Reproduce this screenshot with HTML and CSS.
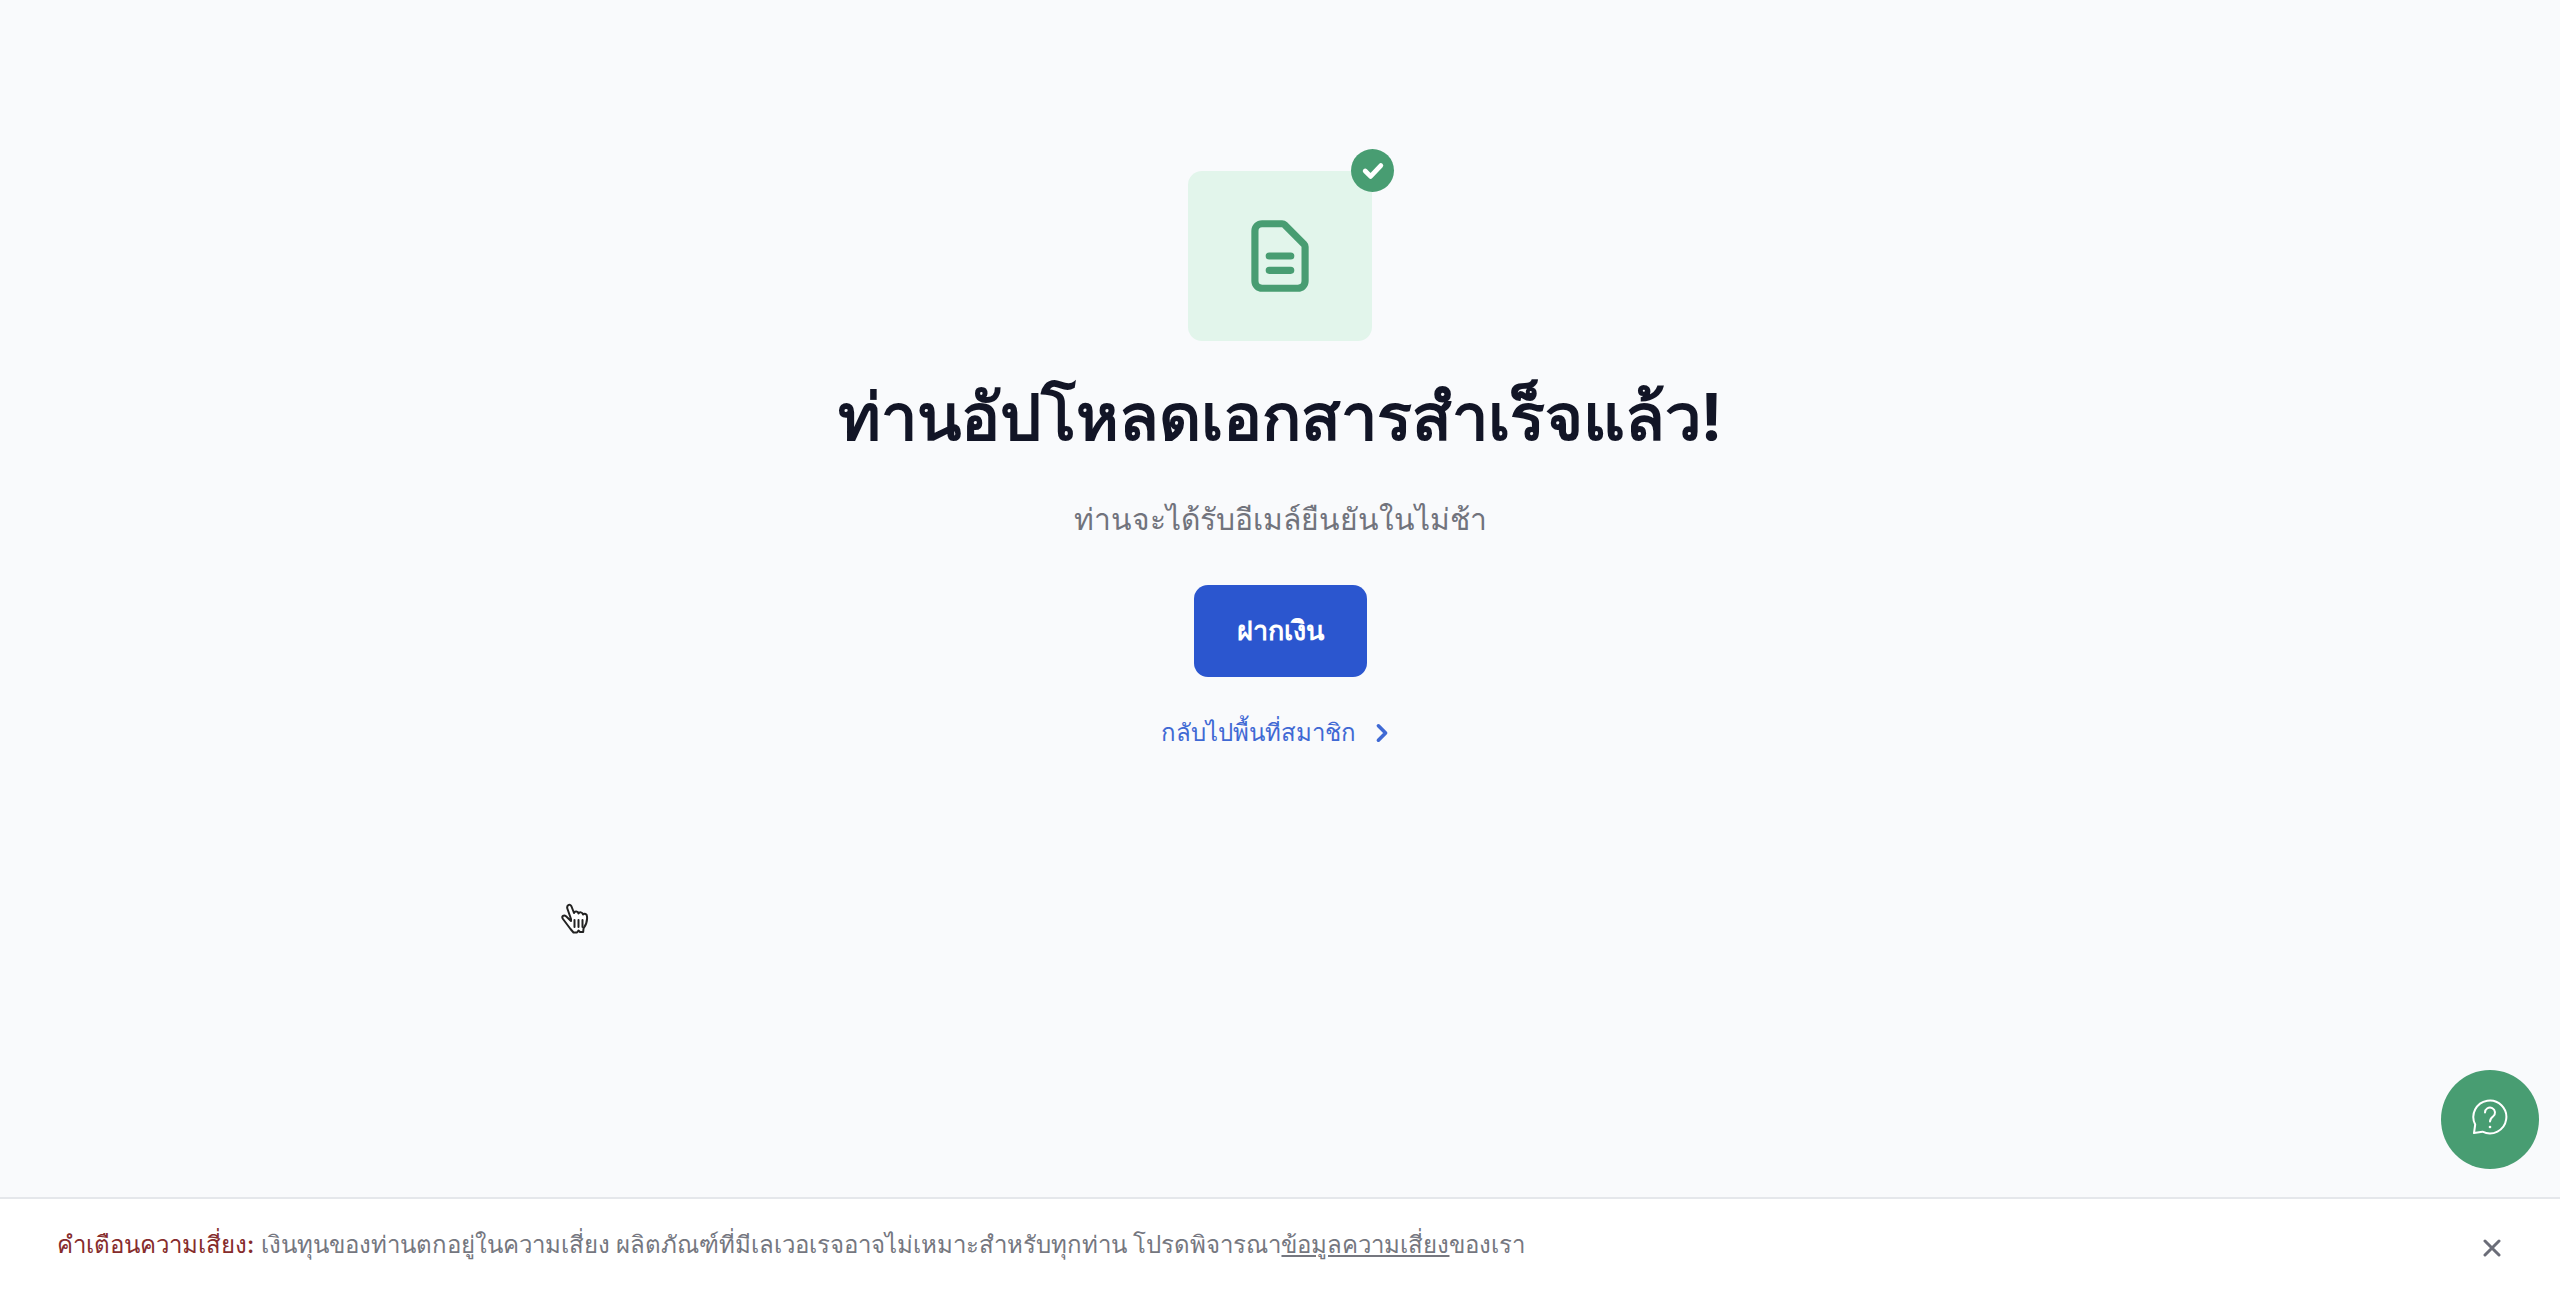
FILE: index.html
```html
<!DOCTYPE html>
<html lang="th">
<head>
  <meta charset="UTF-8">
  <meta name="viewport" content="width=device-width, initial-scale=1.0">
  <title>ท่านอัปโหลดเอกสารสำเร็จแล้ว!</title>
  <link rel="stylesheet" href="styles.css">
</head>
<body>
  <main class="content">
    <div class="document-card">
      <svg class="document-icon" viewBox="0 0 24 24" aria-hidden="true">
        <path d="M9 12h6m-6 4h6m2 5H7a2 2 0 01-2-2V5a2 2 0 012-2h5.586a1 1 0 01.707.293l5.414 5.414a1 1 0 01.293.707V19a2 2 0 01-2 2z"/>
      </svg>
      <span class="check-badge">
        <svg class="check-icon" viewBox="0 0 20 20" aria-hidden="true">
          <path d="M3.500 10l4.500 4.500 8.500-9"/>
        </svg>
      </span>
    </div>

    <h1>ท่านอัปโหลดเอกสารสำเร็จแล้ว!</h1>
    <p class="subtitle">ท่านจะได้รับอีเมล์ยืนยันในไม่ช้า</p>
    <button class="deposit-button" type="button">ฝากเงิน</button>
    <a class="back-link" href="#">
      กลับไปพื้นที่สมาชิก
      <svg class="chevron-icon" viewBox="0 0 20 20" aria-hidden="true">
        <path d="M8 6l4 4-4 4"/>
      </svg>
    </a>
  </main>

  <footer class="risk-bar">
    <p><strong>คำเตือนความเสี่ยง:</strong> เงินทุนของท่านตกอยู่ในความเสี่ยง ผลิตภัณฑ์ที่มีเลเวอเรจอาจไม่เหมาะสำหรับทุกท่าน โปรดพิจารณา<a href="#">ข้อมูลความเสี่ยง</a>ของเรา</p>
    <button class="close-button" type="button" aria-label="ปิด">
      <svg viewBox="0 0 18 18" aria-hidden="true">
        <path d="M2 2l14 14M16 2L2 16"/>
      </svg>
    </button>
  </footer>

  <button class="help-button" type="button" aria-label="ช่วยเหลือ">
    <svg viewBox="0 0 36 36" aria-hidden="true">
      <path d="M2 34L3.200 25.500A16.500 16.500 0 1 1 10.500 32.700Z"/>
      <path d="M13 13.500a5 5 0 1 1 8 4c-2 1.500-3 2.500-3 5"/>
      <circle class="dot" cx="18" cy="28" r="1.300"/>
    </svg>
  </button>

  <svg class="cursor" viewBox="0 0 28 32" aria-hidden="true">
    <path d="M10 16L6.500 6C5.200 2.500 8.800 0 10.500 3.500L13 10C13.500 8 17 8 17.500 10.500 18.500 8.700 21.500 9 22 11.500 23.500 10 26 11 26 13.500 26.500 18 25 22 22.500 25.500L22.200 29H19L17.500 27.500 16 29.500H12.500L9.500 26 2 16C0 13 3 11.500 5 13.200L10 18Z"/>
    <path d="M13.500 17v7M17.500 17v7M21.500 17v7"/>
  </svg>
</body>
</html>
```
FILE: styles.css
```css
/* General styles */
* {
  margin: 0;
  padding: 0;
  box-sizing: border-box;
  font-family: Inter, "Noto Sans", sans-serif;
}

body {
  background-color: #f9fafc;
  display: flex;
  flex-direction: column;
  min-height: 100vh;
}

svg {
  fill: none;
  stroke: currentColor;
  stroke-width: 2;
  stroke-linecap: round;
  stroke-linejoin: round;
}

button {
  border: none;
  cursor: pointer;
}

/* Success message */
.content {
  flex: 1;
  display: flex;
  flex-direction: column;
  align-items: center;
  padding-top: 171px;
}

.document-card {
  position: relative;
  padding: 42px 49px;
  border-radius: 14px;
  background-color: #e2f5eb;
  color: #489d72;
}

.document-icon {
  display: block;
  width: 86px;
  height: 86px;
}

.check-badge {
  position: absolute;
  top: -22px;
  right: -22px;
  display: flex;
  align-items: center;
  justify-content: center;
  width: 43px;
  height: 43px;
  border-radius: 50%;
  background-color: #489d72;
  color: #fff;
}

.check-icon {
  width: 24px;
  height: 24px;
  stroke-width: 4;
}

h1 {
  margin-top: 28px;
  font-size: 65px;
  line-height: 96px;
  font-weight: 700;
  color: #121526;
}

.subtitle {
  margin-top: 30px;
  font-size: 30px;
  line-height: 48px;
  font-weight: 500;
  color: #71737c;
}

.deposit-button {
  margin-top: 42px;
  padding: 25px 43px;
  border-radius: 14px;
  background-color: #2b56cf;
  color: #fff;
  font-size: 27px;
  line-height: 42px;
  font-weight: 600;
}

.back-link {
  display: flex;
  align-items: center;
  gap: 8px;
  margin-top: 36px;
  color: #3f69d4;
  font-size: 24px;
  line-height: 40px;
  font-weight: 500;
  text-decoration: none;
}

.chevron-icon {
  width: 36px;
  height: 36px;
}

/* Risk warning */
.risk-bar {
  display: flex;
  align-items: center;
  justify-content: space-between;
  padding: 26px 50px 27px 57px;
  border-top: 2px solid #e5e7eb;
  background-color: #fff;
}

.risk-bar p {
  color: #75777f;
  font-size: 24px;
  line-height: 40px;
  font-weight: 500;
}

.risk-bar strong {
  color: #862c2c;
  font-weight: 500;
}

.risk-bar a {
  color: inherit;
}

.close-button {
  padding: 14px 9px 8px;
  background: none;
  color: #6b6d78;
}

.close-button svg {
  display: block;
  width: 18px;
  height: 18px;
  stroke-width: 3;
}

/* Help button */
.help-button {
  position: fixed;
  right: 21px;
  bottom: 123px;
  display: flex;
  align-items: center;
  justify-content: center;
  width: 98px;
  height: 99px;
  padding-bottom: 6px;
  border-radius: 50%;
  background-color: #489d72;
  color: #fff;
}

.help-button svg {
  width: 36px;
  height: 36px;
}

.help-button .dot {
  fill: currentColor;
  stroke: none;
}

/* Hand pointer */
.cursor {
  position: absolute;
  top: 903px;
  left: 561px;
  width: 28px;
  height: 32px;
  fill: #fff;
  color: #222;
}
```
